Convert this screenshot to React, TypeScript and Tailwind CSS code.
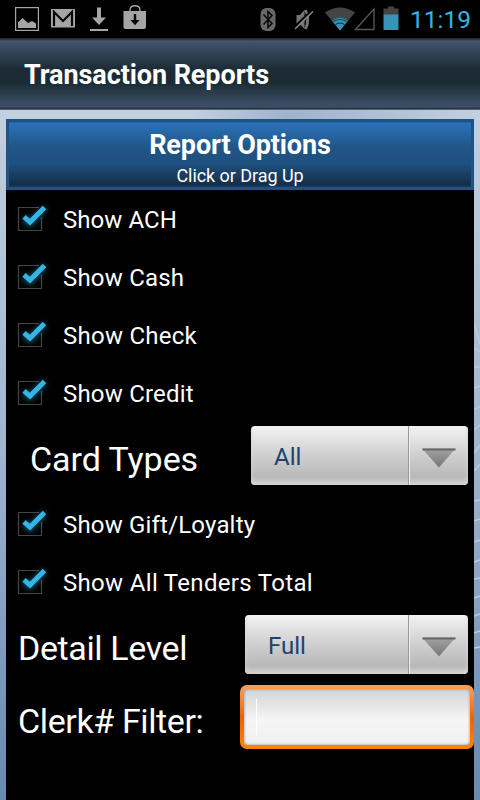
import { useState } from 'react'

interface CheckRowProps { label: string; spacing: string }
interface SpinnerProps { value: string; width: string; valueWidth: string }

function StatusBar() {
  return (
    <div className="flex h-[38px] shrink-0 items-center justify-between bg-black pl-[15px] pr-[9px]">
      <div className="flex h-full text-[#a5a5a5]">
        <svg width="24" height="38" viewBox="0 0 24 38">
          <rect x="0.6" y="7.6" width="22.8" height="22.8" fill="none" stroke="currentColor" strokeWidth="1.2" />
          <path d="M3 28V22.500L7.500 18L13 23L17 21L21 23.500V28Z" fill="currentColor" />
        </svg>
        <svg width="24" height="38" viewBox="0 0 24 38" className="ml-3">
          <path d="M0 9H24V27.500H0Z" fill="currentColor" />
          <path d="M3 26V12L12 21L21 12V26" fill="none" stroke="#080808" strokeWidth="2.2" />
        </svg>
        <svg width="18" height="38" viewBox="0 0 18 38" className="ml-[15px]">
          <path d="M7 7.500H11V17.500H16L9 25L2 17.500H7ZM0 29H18V31H0Z" fill="currentColor" />
        </svg>
        <svg width="24" height="38" viewBox="0 0 24 38" className="ml-[15px]">
          <path d="M7 11V9.500Q7.500 5.700 12 5.700T17 9.500V11" fill="none" stroke="currentColor" strokeWidth="1.4" />
          <path d="M0.500 11H23V27Q23 29 21 29H2.500Q0.500 29 0.500 27Z" fill="currentColor" />
          <path d="M10.800 14H13.200V20H16.500L12 25.300L7.500 20H10.800Z" fill="#080808" />
        </svg>
      </div>

      <div className="flex h-full items-center">
        <svg width="16" height="38" viewBox="0 0 16 38">
          <rect x="0.500" y="8" width="15" height="23" rx="6" fill="#686868" />
          <path d="M3.500 14.500L12 23.500L8 27.500V11.500L12 15.500L3.500 24.500" fill="none" stroke="#050505" strokeWidth="1.5" />
        </svg>
        <svg width="21" height="38" viewBox="0 0 21 38" className="ml-[18px]">
          <path d="M2.500 15H6L10.500 10V29L6 24.500H2.500Z" fill="#747474" />
          <path d="M11.500 10Q16 19.500 11.500 29" fill="none" stroke="#747474" strokeWidth="2.8" />
          <path d="M0 27.500L17.500 10.500" stroke="#000" strokeWidth="2" />
          <path d="M1 29L19 11.500" stroke="#8b8b8b" strokeWidth="1.5" />
        </svg>
        <svg width="30" height="38" viewBox="0 0 30 38" className="ml-2.5">
          <path d="M0 12.500Q15 2.500 30 12.500L15 30.500Z" fill="#444" />
          <path d="M7 20.700Q15 14.700 23 20.700L15 30.500Z" fill="#3993b6" />
          <path d="M8 21.500Q15 17.600 22 21.500M10.500 24.500Q15 21.700 19.500 24.500" fill="none" stroke="#123f52" strokeWidth="1.1" />
        </svg>
        <svg width="21" height="38" viewBox="0 0 21 38" className="-ml-px">
          <path d="M1.500 29.500L20 9V29.500Z" fill="none" stroke="#555" strokeWidth="1.4" />
        </svg>
        <svg width="16" height="38" viewBox="0 0 16 38" className="ml-2">
          <path d="M5 6.500H11V8.500H15.500V15H0.500V8.500H5Z" fill="#444" />
          <path d="M0.500 14.500H15.500V30H0.500Z" fill="#3993b6" />
        </svg>
        <span className="ml-2.5 w-[62px] whitespace-nowrap pt-px pl-px text-[24.5px] leading-[38px] text-[#33b5e5]">11:19</span>
      </div>
    </div>
  )
}

function CheckRow({ label, spacing }: CheckRowProps) {
  const [checked, setChecked] = useState(true)

  return (
    <button onClick={() => setChecked(!checked)} className="flex h-[58px] w-full shrink-0 items-center text-left">
      <svg width="57" height="58" viewBox="0 0 57 58" className="shrink-0">
        <path d={checked ? 'M33 17.500H12.500V40.500H35.500V27' : 'M12.500 17.500H35.500V40.500H12.500Z'} fill="none" stroke="#444" strokeWidth="1.2" />
        {checked && (
          <g fill="none" strokeWidth="4.9" className="text-[#33b5e5]" stroke="currentColor">
            <path d="M18 28.300L24 33.500L38.500 18" className="opacity-60 blur-[3px]" />
            <path d="M18 26.900L24 32.100L38.500 17.600" />
          </g>
        )}
      </svg>
      <span className={`whitespace-nowrap pt-px text-[24px] leading-8 ${spacing}`}>{label}</span>
    </button>
  )
}

function Spinner({ value, width, valueWidth }: SpinnerProps) {
  return (
    <button className={`flex h-[59px] overflow-hidden rounded-[4px] bg-linear-to-b from-[#f3f3f3] via-[#cfcfcf] via-50% to-[#b9b9b9] to-85% text-left shadow-[inset_0_-4px_4px_#d5d5d5] ${width}`}>
      <span className={`h-full border-r border-[#999] pl-[23px] text-[24px] leading-[62px] text-[#20436e] ${valueWidth}`}>{value}</span>
      <span className="flex h-full flex-1 items-center justify-center border-l border-[#eee] pt-1">
        <svg width="34" height="20" viewBox="0 0 34 20">
          <defs>
            <linearGradient id="arrow" x2="0" y2="1"><stop stopColor="#a3a3a3" /><stop offset="1" stopColor="#777" /></linearGradient>
          </defs>
          <path d="M0 0.500H33.500L17 19.500Z" fill="url(#arrow)" />
          <path d="M0.500 1.500H33.500" stroke="#666" strokeWidth="1.8" />
        </svg>
      </span>
    </button>
  )
}

function Backdrop() {
  return (
    <svg className="absolute inset-0" width="480" height="690" viewBox="0 0 480 690">
      <defs>
        <linearGradient id="sky" x2="0" y2="1"><stop stopColor="#c2d0df" /><stop offset=".5" stopColor="#a0b3cf" /><stop offset="1" stopColor="#6689b2" /></linearGradient>
        <linearGradient id="haze"><stop offset=".4" stopColor="#9fb3cf" stopOpacity="0" /><stop offset=".6" stopColor="#9fb3cf" /><stop offset="1" stopColor="#9fb3cf" stopOpacity="0" /></linearGradient>
      </defs>
      <rect width="480" height="690" fill="url(#sky)" />
      <rect width="480" height="10" fill="url(#haze)" />
      <path d="M474 214L480 234M474 238L480 242M474 257H480M474 278L480 276M474 300L480 296M474 320L480 315M474 343L480 335M474 361L480 354M474 391L480 390M474 411L480 409M474 432L480 430M474 452L480 450M474 469L480 468M474 488L480 486M474 506L480 504M474 523L480 521M474 538L480 537" stroke="#b9cce1" strokeWidth="1.5" />
    </svg>
  )
}

export default function App() {
  const [clerk, setClerk] = useState('')

  return (
    <div className="flex h-[800px] w-[480px] flex-col overflow-hidden bg-black font-['Roboto',sans-serif] text-white">
      <StatusBar />
      <header className="flex h-[72px] shrink-0 items-center border-b border-[#53606f] bg-[linear-gradient(to_bottom,#1b222d_0,#43546b_3px,#35475b_12px,#1c2b34_32px,#1b2b34_44px,#35475b_62px,#3d4f68_69px,#202b39_71px)] pl-6">
        <h1 className="whitespace-nowrap pt-1 text-[27px] font-bold tracking-[-0.08px]">Transaction Reports</h1>
      </header>

      <main className="relative flex min-h-0 flex-1 flex-col px-1.5 pt-[9px]">
        <Backdrop />
        <section className="relative flex flex-1 flex-col bg-black">
          <button className="flex h-[71px] shrink-0 flex-col items-center border-3 border-[#205383] bg-[linear-gradient(to_bottom,#205383_0,#2a71b8_5px,#205484_30px,#1e5180_44px,#142f4b_65px,#16324d_67px,#205383_69px)] bg-origin-border">
            <span className="mt-[7px] whitespace-nowrap text-[27px] leading-8 font-bold tracking-[-0.1px]">Report Options</span>
            <span className="whitespace-nowrap text-[18px] leading-[30px] tracking-[-0.05px]">Click or Drag Up</span>
          </button>

          <CheckRow label="Show ACH" spacing="tracking-[0.05px]" />
          <CheckRow label="Show Cash" spacing="tracking-[0.2px]" />
          <CheckRow label="Show Check" spacing="tracking-[0.25px]" />
          <CheckRow label="Show Credit" spacing="tracking-[0.2px]" />

          <div className="flex h-[73px] shrink-0 items-start justify-between pt-1 pr-1.5 pl-6">
            <span className="whitespace-nowrap text-[34px] leading-[66px] tracking-[-0.05px]">Card Types</span>
            <Spinner value="All" width="w-[217px]" valueWidth="w-[158px]" />
          </div>

          <CheckRow label="Show Gift/Loyalty" spacing="tracking-[0.18px]" />
          <CheckRow label="Show All Tenders Total" spacing="tracking-[0.32px]" />

          <div className="flex h-[74px] shrink-0 items-start justify-between pt-1 pr-1.5 pl-3">
            <span className="whitespace-nowrap text-[34px] leading-[66px] tracking-[-0.38px]">Detail Level</span>
            <Spinner value="Full" width="w-[223px]" valueWidth="w-[164px]" />
          </div>

          <label className="flex h-16 shrink-0 items-center justify-between pl-3">
            <span className="whitespace-nowrap pt-2 text-[34px] leading-[64px] tracking-[-0.38px]">Clerk# Filter:</span>
            <span className="flex h-16 w-[234px] rounded-[7px] bg-linear-to-b from-[#ffa04c] via-[#ed6200] to-[#ff8500] p-1">
              <span className="flex w-full items-center rounded-[4px] bg-linear-to-b from-[#d4d4d4] via-[#f5f5f5] via-55% to-[#f0f0f0] pl-3 shadow-[inset_0_0_3px_#888]">
                <span className="h-[37px] w-px bg-white" />
                <input value={clerk} onChange={e => setClerk(e.target.value)} className="w-full bg-transparent text-[24px] text-[#20436e] outline-none" />
              </span>
            </span>
          </label>
        </section>
      </main>
    </div>
  )
}
